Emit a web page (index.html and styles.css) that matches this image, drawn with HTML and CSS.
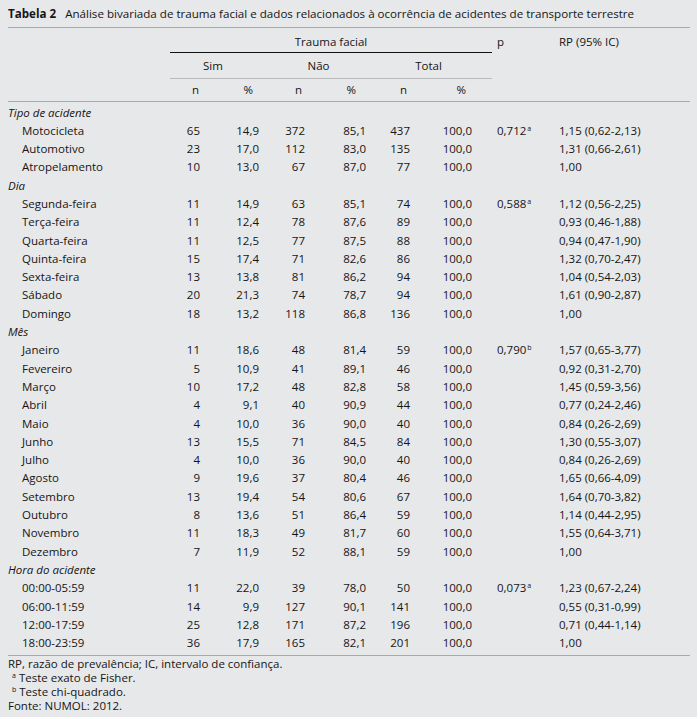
FILE: index.html
```html
<!DOCTYPE html>
<html lang="pt">
<head>
<meta charset="utf-8">
<link rel="stylesheet" href="styles.css">
</head>
<body>
<div class="panel">
  <div class="title"><b>Tabela 2</b>&nbsp;&nbsp; Análise bivariada de trauma facial e dados relacionados à ocorrência de acidentes de transporte terrestre</div>
  <table class="tab">
    <colgroup>
      <col class="c-label"><col class="c-n1"><col class="c-p1"><col class="c-n2"><col class="c-p2"><col class="c-n3"><col class="c-p3"><col class="c-pv"><col class="c-rp">
    </colgroup>
    <thead>
      <tr class="h1">
        <th></th>
        <th colspan="6" class="grp">Trauma facial</th>
        <th class="pv">p</th>
        <th class="rp">RP (95% IC)</th>
      </tr>
      <tr class="h2">
        <th></th>
        <th colspan="2" class="g g1">Sim</th>
        <th colspan="2" class="g g2">Não</th>
        <th colspan="2" class="g g3">Total</th>
        <th></th><th></th>
      </tr>
      <tr class="h3">
        <th></th>
        <th class="s1">n</th><th class="s2">%</th>
        <th class="s3">n</th><th class="s4">%</th>
        <th class="s5">n</th><th class="s6">%</th>
        <th></th><th></th>
      </tr>
    </thead>
    <tbody>
      <tr class="first"><td class="cat">Tipo de acidente</td><td colspan="8"></td></tr>
      <tr><td class="lbl">Motocicleta</td><td>65</td><td>14,9</td><td>372</td><td>85,1</td><td>437</td><td>100,0</td><td class="pv">0,712<sup>a</sup></td><td class="rp">1,15 (0,62-2,13)</td></tr>
      <tr><td class="lbl">Automotivo</td><td>23</td><td>17,0</td><td>112</td><td>83,0</td><td>135</td><td>100,0</td><td class="pv"></td><td class="rp">1,31 (0,66-2,61)</td></tr>
      <tr><td class="lbl">Atropelamento</td><td>10</td><td>13,0</td><td>67</td><td>87,0</td><td>77</td><td>100,0</td><td class="pv"></td><td class="rp">1,00</td></tr>
      <tr><td class="cat">Dia</td><td colspan="8"></td></tr>
      <tr><td class="lbl">Segunda-feira</td><td>11</td><td>14,9</td><td>63</td><td>85,1</td><td>74</td><td>100,0</td><td class="pv">0,588<sup>a</sup></td><td class="rp">1,12 (0,56-2,25)</td></tr>
      <tr><td class="lbl">Terça-feira</td><td>11</td><td>12,4</td><td>78</td><td>87,6</td><td>89</td><td>100,0</td><td class="pv"></td><td class="rp">0,93 (0,46-1,88)</td></tr>
      <tr><td class="lbl">Quarta-feira</td><td>11</td><td>12,5</td><td>77</td><td>87,5</td><td>88</td><td>100,0</td><td class="pv"></td><td class="rp">0,94 (0,47-1,90)</td></tr>
      <tr><td class="lbl">Quinta-feira</td><td>15</td><td>17,4</td><td>71</td><td>82,6</td><td>86</td><td>100,0</td><td class="pv"></td><td class="rp">1,32 (0,70-2,47)</td></tr>
      <tr><td class="lbl">Sexta-feira</td><td>13</td><td>13,8</td><td>81</td><td>86,2</td><td>94</td><td>100,0</td><td class="pv"></td><td class="rp">1,04 (0,54-2,03)</td></tr>
      <tr><td class="lbl">Sábado</td><td>20</td><td>21,3</td><td>74</td><td>78,7</td><td>94</td><td>100,0</td><td class="pv"></td><td class="rp">1,61 (0,90-2,87)</td></tr>
      <tr><td class="lbl">Domingo</td><td>18</td><td>13,2</td><td>118</td><td>86,8</td><td>136</td><td>100,0</td><td class="pv"></td><td class="rp">1,00</td></tr>
      <tr><td class="cat">Mês</td><td colspan="8"></td></tr>
      <tr><td class="lbl">Janeiro</td><td>11</td><td>18,6</td><td>48</td><td>81,4</td><td>59</td><td>100,0</td><td class="pv">0,790<sup>b</sup></td><td class="rp">1,57 (0,65-3,77)</td></tr>
      <tr><td class="lbl">Fevereiro</td><td>5</td><td>10,9</td><td>41</td><td>89,1</td><td>46</td><td>100,0</td><td class="pv"></td><td class="rp">0,92 (0,31-2,70)</td></tr>
      <tr><td class="lbl">Março</td><td>10</td><td>17,2</td><td>48</td><td>82,8</td><td>58</td><td>100,0</td><td class="pv"></td><td class="rp">1,45 (0,59-3,56)</td></tr>
      <tr><td class="lbl">Abril</td><td>4</td><td>9,1</td><td>40</td><td>90,9</td><td>44</td><td>100,0</td><td class="pv"></td><td class="rp">0,77 (0,24-2,46)</td></tr>
      <tr><td class="lbl">Maio</td><td>4</td><td>10,0</td><td>36</td><td>90,0</td><td>40</td><td>100,0</td><td class="pv"></td><td class="rp">0,84 (0,26-2,69)</td></tr>
      <tr><td class="lbl">Junho</td><td>13</td><td>15,5</td><td>71</td><td>84,5</td><td>84</td><td>100,0</td><td class="pv"></td><td class="rp">1,30 (0,55-3,07)</td></tr>
      <tr><td class="lbl">Julho</td><td>4</td><td>10,0</td><td>36</td><td>90,0</td><td>40</td><td>100,0</td><td class="pv"></td><td class="rp">0,84 (0,26-2,69)</td></tr>
      <tr><td class="lbl">Agosto</td><td>9</td><td>19,6</td><td>37</td><td>80,4</td><td>46</td><td>100,0</td><td class="pv"></td><td class="rp">1,65 (0,66-4,09)</td></tr>
      <tr><td class="lbl">Setembro</td><td>13</td><td>19,4</td><td>54</td><td>80,6</td><td>67</td><td>100,0</td><td class="pv"></td><td class="rp">1,64 (0,70-3,82)</td></tr>
      <tr><td class="lbl">Outubro</td><td>8</td><td>13,6</td><td>51</td><td>86,4</td><td>59</td><td>100,0</td><td class="pv"></td><td class="rp">1,14 (0,44-2,95)</td></tr>
      <tr><td class="lbl">Novembro</td><td>11</td><td>18,3</td><td>49</td><td>81,7</td><td>60</td><td>100,0</td><td class="pv"></td><td class="rp">1,55 (0,64-3,71)</td></tr>
      <tr><td class="lbl">Dezembro</td><td>7</td><td>11,9</td><td>52</td><td>88,1</td><td>59</td><td>100,0</td><td class="pv"></td><td class="rp">1,00</td></tr>
      <tr><td class="cat">Hora do acidente</td><td colspan="8"></td></tr>
      <tr><td class="lbl">00:00-05:59</td><td>11</td><td>22,0</td><td>39</td><td>78,0</td><td>50</td><td>100,0</td><td class="pv">0,073<sup>a</sup></td><td class="rp">1,23 (0,67-2,24)</td></tr>
      <tr><td class="lbl">06:00-11:59</td><td>14</td><td>9,9</td><td>127</td><td>90,1</td><td>141</td><td>100,0</td><td class="pv"></td><td class="rp">0,55 (0,31-0,99)</td></tr>
      <tr><td class="lbl">12:00-17:59</td><td>25</td><td>12,8</td><td>171</td><td>87,2</td><td>196</td><td>100,0</td><td class="pv"></td><td class="rp">0,71 (0,44-1,14)</td></tr>
      <tr class="last"><td class="lbl">18:00-23:59</td><td>36</td><td>17,9</td><td>165</td><td>82,1</td><td>201</td><td>100,0</td><td class="pv"></td><td class="rp">1,00</td></tr>
    </tbody>
  </table>
  <div class="notes">
    <p>RP, razão de prevalência; IC, intervalo de confiança.</p>
    <p class="ind"><sup>a</sup> Teste exato de Fisher.</p>
    <p class="ind"><sup>b</sup> Teste chi-quadrado.</p>
    <p>Fonte: NUMOL: 2012.</p>
  </div>
</div>
</body>
</html>
```

FILE: styles.css
```css
html, body {
  margin: 0;
  padding: 0;
  background: #ffffff;
}

.panel {
  box-sizing: border-box;
  width: 697px;
  height: 717px;
  padding: 0 7px 0 8px;
  background: #e7e8ea;
  color: #151515;
  font-family: "Open Sans", "DejaVu Sans", sans-serif;
  font-size: 11.5px;
}

.title {
  padding-top: 6px;
  line-height: 16px;
  height: 21px;
  font-size: 11.6px;
  border-bottom: 1px solid #a9aaac;
  white-space: nowrap;
}

.title b {
  font-weight: 700;
}

.tab {
  border-collapse: collapse;
  table-layout: fixed;
  width: 682px;
}

.c-label { width: 162px; }
.c-n1 { width: 40px; }
.c-p1 { width: 60px; }
.c-n2 { width: 45px; }
.c-p2 { width: 60px; }
.c-n3 { width: 45px; }
.c-p3 { width: 72px; }
.c-pv { width: 62px; }
.c-rp { width: 136px; }

.tab th {
  font-weight: 400;
  padding: 0;
  white-space: nowrap;
}

.h1 th {
  height: 24px;
  padding-top: 6px;
  box-sizing: border-box;
  line-height: 16px;
  vertical-align: top;
}

.h1 .grp {
  border-bottom: 1px solid #111;
  text-align: center;
  padding-left: 0;
}

.h1 .pv, .h1 .rp {
  text-align: left;
  padding-left: 5px;
}

.h2 th {
  height: 25px;
  line-height: 25px;
  border-bottom: 1px solid #b9babc;
}

.h2 th:first-child,
.h2 th:nth-child(5),
.h2 th:nth-child(6) {
  border-bottom: none;
}

.g1 { text-align: center; padding-right: 14px !important; }
.g2 { text-align: center; padding-right: 8px !important; }
.g3 { text-align: center; padding-right: 10px !important; }

.h3 th {
  height: 22px;
  line-height: 21px;
  text-align: right;
  border-bottom: 1px solid #a9aaac;
}

.h3 .s1 { padding-right: 11px; }
.h3 .s2 { padding-right: 17px; }
.h3 .s3 { padding-right: 13px; }
.h3 .s4 { padding-right: 19px; }
.h3 .s5 { padding-right: 13px; }
.h3 .s6 { padding-right: 26px; }

.tab td {
  padding: 0;
  height: 18.3px;
  line-height: 18.3px;
  text-align: right;
  white-space: nowrap;
}

.tab td:nth-child(2) { padding-right: 10px; }
.tab td:nth-child(3) { padding-right: 11px; }
.tab td:nth-child(4) { padding-right: 10px; }
.tab td:nth-child(5) { padding-right: 9px; }
.tab td:nth-child(6) { padding-right: 10px; }
.tab td:nth-child(7) { padding-right: 20px; }

.tab td.pv, .tab td.rp {
  text-align: left;
  padding-left: 5px;
  padding-right: 0;
}

.tab td.cat {
  text-align: left;
  font-style: italic;
}

.tab td.lbl {
  text-align: left;
  padding-left: 14px;
}

.tab tr.first td {
  padding-top: 2px;
}

.tab tr.last td {
  padding-bottom: 3px;
  border-bottom: 1px solid #a9aaac;
}

sup {
  font-size: 7px;
  line-height: 0;
  vertical-align: 4px;
  margin-left: 1px;
}

.notes {
  padding-top: 1px;
}

.notes p {
  margin: 0;
  height: 14px;
  line-height: 14px;
}

.notes .ind {
  padding-left: 4px;
}

.notes sup {
  margin-left: 0;
}
```
